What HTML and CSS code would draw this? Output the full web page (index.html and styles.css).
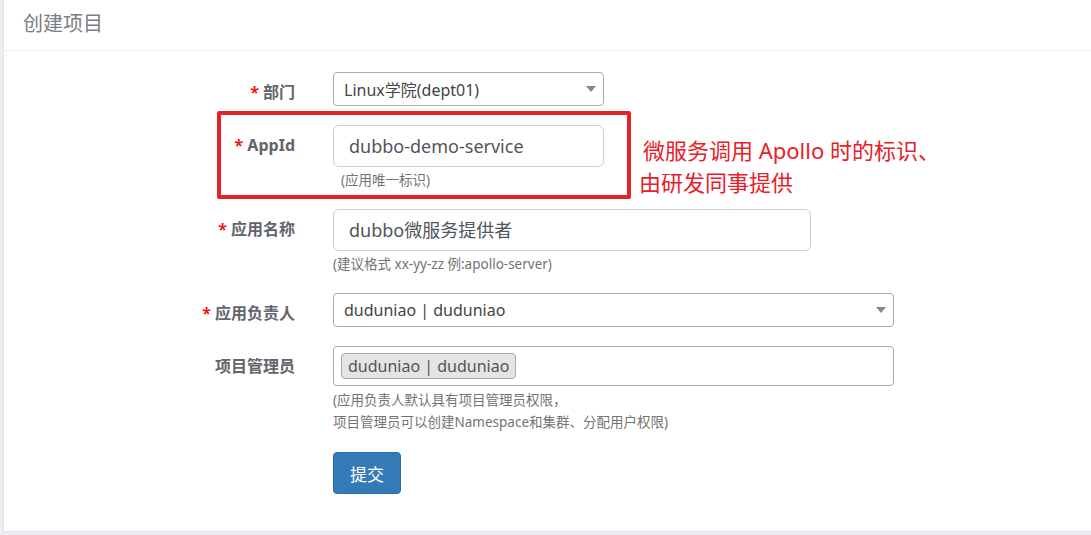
FILE: index.html
```html
<!DOCTYPE html>
<html lang="zh-CN">
<head>
<meta charset="utf-8">
<title>创建项目</title>
<link rel="stylesheet" href="styles.css">
</head>
<body>
<div class="page">
  <div class="panel">
    <div class="panel-heading">创建项目</div>
    <form class="panel-body">
      <div class="form-row">
        <label class="form-label"><span class="req">*</span> 部门</label>
        <div class="control">
          <div class="select w-sm"><span>Linux学院(dept01)</span><i class="caret"></i></div>
        </div>
      </div>
      <div class="form-row">
        <label class="form-label"><span class="req">*</span> AppId</label>
        <div class="control">
          <div class="input w-sm">dubbo-demo-service</div>
          <div class="help help-indent">(应用唯一标识)</div>
        </div>
      </div>
      <div class="form-row">
        <label class="form-label"><span class="req">*</span> 应用名称</label>
        <div class="control">
          <div class="input w-md">dubbo微服务提供者</div>
          <div class="help">(建议格式 xx-yy-zz 例:apollo-server)</div>
        </div>
      </div>
      <div class="form-row">
        <label class="form-label"><span class="req">*</span> 应用负责人</label>
        <div class="control">
          <div class="select w-lg"><span>duduniao | duduniao</span><i class="caret"></i></div>
        </div>
      </div>
      <div class="form-row">
        <label class="form-label">项目管理员</label>
        <div class="control">
          <div class="multi w-lg"><span class="tag">duduniao | duduniao</span></div>
          <div class="help help-multi">(应用负责人默认具有项目管理员权限，<br>项目管理员可以创建Namespace和集群、分配用户权限)</div>
        </div>
      </div>
      <div class="form-row">
        <span class="form-label"></span>
        <div class="control">
          <button type="button" class="btn">提交</button>
        </div>
      </div>
    </form>
    <div class="note-box"></div>
    <div class="note-text">
      <p class="note-first">微服务调用 Apollo 时的标识、</p>
      <p>由研发同事提供</p>
    </div>
  </div>
</div>
</body>
</html>
```

FILE: styles.css
```css
html, body {
  margin: 0;
  padding: 0;
}
body {
  background: #eceef3;
  font-family: "Noto Sans", "Noto Sans CJK SC", sans-serif;
  overflow: hidden;
}
.page {
  padding: 0 0 3px 3px;
}
.panel {
  position: relative;
  background: #fff;
  border-left: 1px solid #dfe2e8;
  border-bottom: 1px solid #dfe2e8;
  margin-right: -30px;
}
.panel-heading {
  height: 50px;
  line-height: 48px;
  padding-left: 19px;
  font-size: 20px;
  color: #7a7d82;
  border-bottom: 1px solid #eeeeee;
}
.panel-body {
  display: flex;
  flex-direction: column;
  gap: 19px;
  padding: 21px 0 37px 0;
  margin: 0;
}
.form-row {
  display: grid;
  grid-template-columns: 291px 1fr;
  column-gap: 38px;
  align-items: start;
}
.form-label {
  text-align: right;
  padding-top: 9px;
  line-height: 22px;
  font-size: 16px;
  font-weight: 700;
  color: #62656b;
}
.req {
  color: #f01616;
  font-weight: 700;
}
.control {
  display: flex;
  flex-direction: column;
  align-items: flex-start;
}
.w-sm { width: 271px; }
.w-md { width: 478px; }
.w-lg { width: 561px; }
.select {
  box-sizing: border-box;
  height: 34px;
  border: 1px solid #aaaaaa;
  border-radius: 4px;
  display: flex;
  align-items: center;
  justify-content: space-between;
  padding: 0 7px 0 10px;
  font-size: 16px;
  color: #444;
}
.caret {
  width: 0;
  height: 0;
  border-left: 5px solid transparent;
  border-right: 5px solid transparent;
  border-top: 6px solid #888;
}
.input {
  box-sizing: border-box;
  height: 42px;
  border: 1px solid #cccccc;
  border-radius: 6px;
  padding: 0 15px;
  line-height: 40px;
  font-size: 18px;
  color: #50555c;
}
.help {
  margin-top: 4px;
  font-size: 13.5px;
  line-height: 19px;
  color: #737373;
}
.help-indent {
  padding-left: 8px;
}
.help-multi {
  margin-top: 3px;
  line-height: 22px;
}
.multi {
  box-sizing: border-box;
  height: 40px;
  border: 1px solid #aaaaaa;
  border-radius: 4px;
  padding: 6px 7px;
}
.tag {
  display: inline-block;
  box-sizing: border-box;
  height: 26px;
  line-height: 24px;
  padding: 0 6px;
  background: #e4e4e4;
  border: 1px solid #aaaaaa;
  border-radius: 4px;
  font-size: 16px;
  color: #555;
}
.btn {
  height: 42px;
  padding: 0 16px;
  font-family: inherit;
  font-size: 17px;
  color: #fff;
  background: #337ab7;
  border: 1px solid #2e6da4;
  border-radius: 4px;
}
.note-box {
  position: absolute;
  left: 213px;
  top: 111px;
  width: 414px;
  height: 88px;
  box-sizing: border-box;
  border: 4px solid #e8202a;
  border-radius: 2px;
}
.note-text {
  position: absolute;
  left: 635px;
  top: 134px;
  font-size: 22px;
  line-height: 32px;
  color: #e8202a;
  white-space: nowrap;
}
.note-text p {
  margin: 0;
}
.note-first {
  padding-left: 4px;
}
```
